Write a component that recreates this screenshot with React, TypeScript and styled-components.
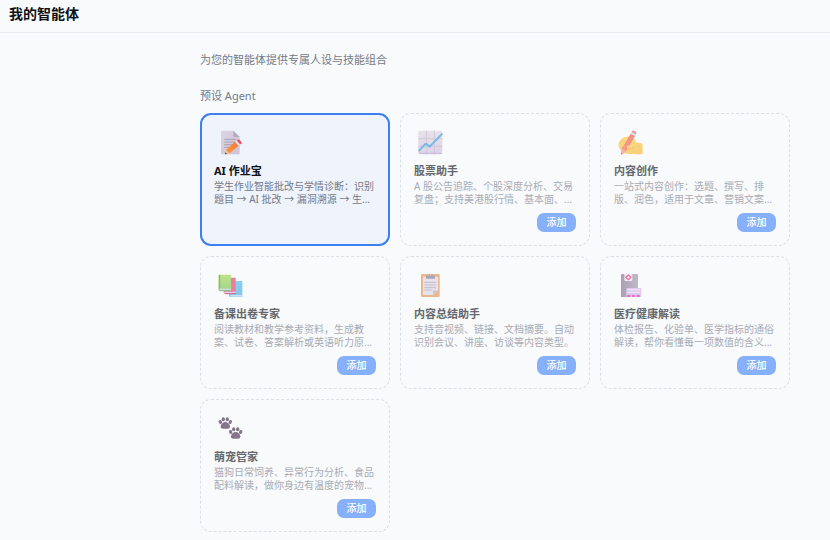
import React from "react";
import styled, { createGlobalStyle, css } from "styled-components";

const GlobalStyle = createGlobalStyle`
  *, *::before, *::after { box-sizing: border-box; }
  body {
    margin: 0;
    background: #f8fafc;
    color: #0f1115;
    font-family: "Noto Sans", "Noto Sans CJK SC", sans-serif;
  }
`;

const Header = styled.header`
  padding: 3px 9px 8px;
  border-bottom: 1px solid #e9ebef;
`;

const PageTitle = styled.h1`
  margin: 0;
  font-size: 14px;
  line-height: 21px;
  font-weight: 700;
`;

const Content = styled.main`
  padding: 18px 40px 8px 200px;
`;

const Intro = styled.p`
  margin: 0 0 18px;
  font-size: 11px;
  line-height: 18px;
  color: #747a87;
`;

const SectionTitle = styled.h2`
  margin: 0 0 9px;
  font-size: 11px;
  line-height: 17px;
  font-weight: 400;
  color: #747a87;
`;

const AgentGrid = styled.ul`
  display: grid;
  grid-template-columns: repeat(3, minmax(0, 1fr));
  gap: 10px;
  margin: 0;
  padding: 0;
  list-style: none;
`;

const Card = styled.li<{ $active?: boolean }>`
  display: flex;
  flex-direction: column;
  align-items: flex-start;
  padding: 16px 13px 13px;
  border: 1px dashed #dcdfe3;
  border-radius: 11px;
  ${(p) =>
    p.$active &&
    css`
      padding: 15px 12px 12px;
      border: 2px solid #3b7ff0;
      background: #eef3fc;
    `}
`;

const Icon = styled.svg`
  width: 26px;
  height: 26px;
  margin: 0 0 6px 4px;
`;

const AgentName = styled.h3<{ $active?: boolean }>`
  margin: 0 0 1px;
  font-size: 11px;
  line-height: 17px;
  font-weight: 700;
  color: ${(p) => (p.$active ? "#0f1115" : "#65676b")};
`;

const Description = styled.p<{ $active?: boolean }>`
  display: -webkit-box;
  -webkit-box-orient: vertical;
  -webkit-line-clamp: 2;
  overflow: hidden;
  margin: 0 0 7px;
  font-size: 10px;
  line-height: 13px;
  color: ${(p) => (p.$active ? "#747a87" : "#a8acb5")};
`;

const AddButton = styled.button`
  align-self: flex-end;
  min-width: 39px;
  margin-top: auto;
  padding: 0 9px;
  border: 0;
  border-radius: 7px;
  background: #86b0f9;
  color: #fff;
  font: 500 10px/19px "Noto Sans", "Noto Sans CJK SC", sans-serif;
  cursor: pointer;
`;

const HomeworkIcon = () => (
  <Icon viewBox="0 0 78 78" aria-hidden="true">
    <defs>
      <linearGradient id="hwPage" x1="0" y1="0" x2="1" y2="1">
        <stop offset="0" stopColor="#dcd5e2" />
        <stop offset="1" stopColor="#cfc1d8" />
      </linearGradient>
      <linearGradient id="hwPencil" x1="1" y1="0" x2="0" y2="1">
        <stop offset="0" stopColor="#f47b3c" />
        <stop offset="1" stopColor="#fb9a3c" />
      </linearGradient>
    </defs>
    <path d="M12 2h34l19 19v49a3 3 0 0 1-3 3H12a3 3 0 0 1-3-3V5a3 3 0 0 1 3-3z" fill="url(#hwPage)" />
    <path d="M46 2l19 19H49a3 3 0 0 1-3-3z" fill="#b5aabd" />
    <path d="M19 28h36M19 36h34M19 44h27M19 52h16" stroke="#a9a0b1" strokeWidth="3" />
    <path d="M24 60l27-25 11 12-27 23-14 3z" fill="url(#hwPencil)" />
    <path d="M24 60l11 10-14 3z" fill="#f5c49b" />
    <path d="M22 67l5 5-6 1z" fill="#57404b" />
    <path d="M51 35l5-4 10 12-4 4z" fill="#e5dfed" />
    <path d="M56 31l4-2c3-1 5 0 7 3l3 4c2 3 1 5-1 6l-3 1z" fill="#ef4f57" />
  </Icon>
);

const StockIcon = () => (
  <Icon viewBox="0 0 78 78" aria-hidden="true">
    <defs>
      <linearGradient id="stBg" x1="0" y1="0" x2="0" y2="1">
        <stop offset="0" stopColor="#e6e2ea" />
        <stop offset="1" stopColor="#ddd3e8" />
      </linearGradient>
    </defs>
    <rect x="1" y="2" width="72" height="71" rx="7" fill="url(#stBg)" />
    <path d="M25 2v71M49 2v71M1 26h72M1 49h72" stroke="#d1cbd8" strokeWidth="3" />
    <path d="M3 70h68" stroke="#c8b8df" strokeWidth="3" strokeLinecap="round" />
    <path d="M2 63l21-22 12 9L73 11" fill="none" stroke="#78b9e5" strokeWidth="6" strokeLinejoin="round" />
  </Icon>
);

const WritingIcon = () => (
  <Icon viewBox="0 0 78 78" aria-hidden="true">
    <defs>
      <linearGradient id="wrHand" x1="0" y1="0" x2="1" y2="1">
        <stop offset="0" stopColor="#fbdc86" />
        <stop offset="1" stopColor="#f9ce78" />
      </linearGradient>
      <linearGradient id="wrPencil" x1="1" y1="0" x2="0" y2="1">
        <stop offset="0" stopColor="#f48b80" />
        <stop offset="1" stopColor="#f8a183" />
      </linearGradient>
    </defs>
    <path d="M2 40c2-10 13-20 24-20l12-1c6 1 10 5 12 10l5 8 15 3c4 1 4 5 4 8v23c-8 2-18 2-26 0-10 2-22 2-30-3L6 57c-4-5-6-11-4-17z" fill="url(#wrHand)" />
    <path d="M5 42c4-6 9-9 16-11M7 53c5 0 8-1 11-4" fill="none" stroke="#f3c176" strokeWidth="3" />
    <path d="M38 11l13 7-26 45-10 8-5-4 2-12z" fill="url(#wrPencil)" />
    <path d="M12 57l12 6-9 8-3 2-4-2z" fill="#f2b6a3" />
    <path d="M9 68l5 3-5 3z" fill="#d2777d" />
    <path d="M38 11l3-5 13 7-3 5z" fill="#e0dae8" />
    <path d="M41 6l2-3c3-3 12 1 12 6l-1 4z" fill="#f28e99" />
    <path d="M27 47c9 0 15-3 20-8 5-3 9 2 6 7-5 8-14 11-25 11z" fill="#fad982" />
    <path d="M28 58c9 0 17-3 22-9" fill="none" stroke="#f0bd6e" strokeWidth="3" />
  </Icon>
);

const BooksIcon = () => (
  <Icon viewBox="0 0 78 78" aria-hidden="true">
    <defs>
      <linearGradient id="bkGreen" x1="0" y1="0" x2="0" y2="1">
        <stop offset="0" stopColor="#c1e28b" />
        <stop offset="1" stopColor="#a0d68a" />
      </linearGradient>
      <linearGradient id="bkBlue" x1="0" y1="0" x2="1" y2="1">
        <stop offset="0" stopColor="#8ed7f3" />
        <stop offset="1" stopColor="#7fc4ee" />
      </linearGradient>
    </defs>
    <path d="M34 24h39v48H36a4 4 0 0 1-3-4z" fill="url(#bkBlue)" />
    <path d="M38 66h35v5H38z" fill="#d9ddf3" />
    <path d="M17 14h36v48H20a4 4 0 0 1-3-4z" fill="#eb7d9f" />
    <path d="M19 56h34v5H19z" fill="#e5cfe2" />
    <path d="M21 62h33" stroke="#c96d8f" strokeWidth="3" />
    <path d="M4 5h35v48H5a4 4 0 0 1-4-4V8a3 3 0 0 1 3-3z" fill="url(#bkGreen)" />
    <path d="M5 5v43" stroke="#83be78" strokeWidth="4" />
    <path d="M4 47h35v5H4z" fill="#d6d6e3" />
    <path d="M3 53h36" stroke="#86bd89" strokeWidth="3" />
  </Icon>
);

const ClipboardIcon = () => (
  <Icon viewBox="0 0 78 78" aria-hidden="true">
    <rect x="9" y="3" width="56" height="69" rx="4" fill="#eab68e" />
    <path d="M15 11h45v42L46 66H15z" fill="#e7e3ee" />
    <path d="M60 53L46 66l-2-9c0-3 2-5 5-5z" fill="#cbc5d4" />
    <path d="M19 28h35M19 36h35M19 44h35M19 51h22" stroke="#c0bac8" strokeWidth="3" />
    <path d="M24 8h8c0-8 12-8 12 0h7v9H24z" fill="#aaa5b1" />
    <circle cx="38" cy="6" r="2" fill="#e1dce6" />
  </Icon>
);

const MedicalIcon = () => (
  <Icon viewBox="0 0 78 78" aria-hidden="true">
    <defs>
      <linearGradient id="mdBase" x1="0" y1="0" x2="1" y2="0">
        <stop offset="0" stopColor="#aaa1b2" />
        <stop offset="1" stopColor="#c0b9c8" />
      </linearGradient>
    </defs>
    <path d="M11 3h49v69H9V5z" fill="url(#mdBase)" />
    <path d="M19 3h24v18a3 3 0 0 1-3 3H22a3 3 0 0 1-3-3z" fill="#f3ebf6" />
    <path d="M31 6l8 7-8 7-8-7z" fill="none" stroke="#ee7497" strokeWidth="4" strokeLinejoin="round" />
    <rect x="25" y="45" width="45" height="27" rx="2" fill="#ddc9ef" />
    <path d="M28 50h38M28 58h38" stroke="#efe2f7" strokeWidth="4" />
    <path d="M27 69h11M42 69h9M55 69h11" stroke="#e277c7" strokeWidth="6" />
  </Icon>
);

const Paw = () => (
  <>
    <path d="M20 15c8 0 14 8 14 14 0 6-6 6-14 6S6 35 6 29c0-6 6-14 14-14z" />
    <ellipse cx="5" cy="15" rx="5" ry="6" transform="rotate(-20 5 15)" />
    <ellipse cx="14" cy="7" rx="5" ry="6" />
    <ellipse cx="26" cy="7" rx="5" ry="6" />
    <ellipse cx="35" cy="15" rx="5" ry="6" transform="rotate(20 35 15)" />
  </>
);

const PawsIcon = () => (
  <Icon viewBox="0 0 78 78" aria-hidden="true">
    <g fill="#86768c">
      <g transform="translate(2 3)"><Paw /></g>
      <g transform="translate(33 33)"><Paw /></g>
    </g>
  </Icon>
);

interface Agent {
  name: string;
  description: string;
  icon: React.FC;
  active?: boolean;
}

const agents: Agent[] = [
  { name: "AI 作业宝", description: "学生作业智能批改与学情诊断：识别题目 → AI 批改 → 漏洞溯源 → 生...", icon: HomeworkIcon, active: true },
  { name: "股票助手", description: "A 股公告追踪、个股深度分析、交易复盘；支持美港股行情、基本面、...", icon: StockIcon },
  { name: "内容创作", description: "一站式内容创作：选题、撰写、排版、润色，适用于文章、营销文案...", icon: WritingIcon },
  { name: "备课出卷专家", description: "阅读教材和教学参考资料，生成教案、试卷、答案解析或英语听力原...", icon: BooksIcon },
  { name: "内容总结助手", description: "支持音视频、链接、文档摘要。自动识别会议、讲座、访谈等内容类型。", icon: ClipboardIcon },
  { name: "医疗健康解读", description: "体检报告、化验单、医学指标的通俗解读，帮你看懂每一项数值的含义...", icon: MedicalIcon },
  { name: "萌宠管家", description: "猫狗日常饲养、异常行为分析、食品配料解读，做你身边有温度的宠物...", icon: PawsIcon },
];

export default function App() {
  return (
    <>
      <GlobalStyle />
      <Header>
        <PageTitle>我的智能体</PageTitle>
      </Header>
      <Content>
        <Intro>为您的智能体提供专属人设与技能组合</Intro>
        <SectionTitle>预设 Agent</SectionTitle>
        <AgentGrid>
          {agents.map(({ name, description, icon: AgentIcon, active }) => (
            <Card key={name} $active={active}>
              <AgentIcon />
              <AgentName $active={active}>{name}</AgentName>
              <Description $active={active}>{description}</Description>
              {!active && <AddButton type="button" aria-label={`添加 ${name}`}>添加</AddButton>}
            </Card>
          ))}
        </AgentGrid>
      </Content>
    </>
  );
}
